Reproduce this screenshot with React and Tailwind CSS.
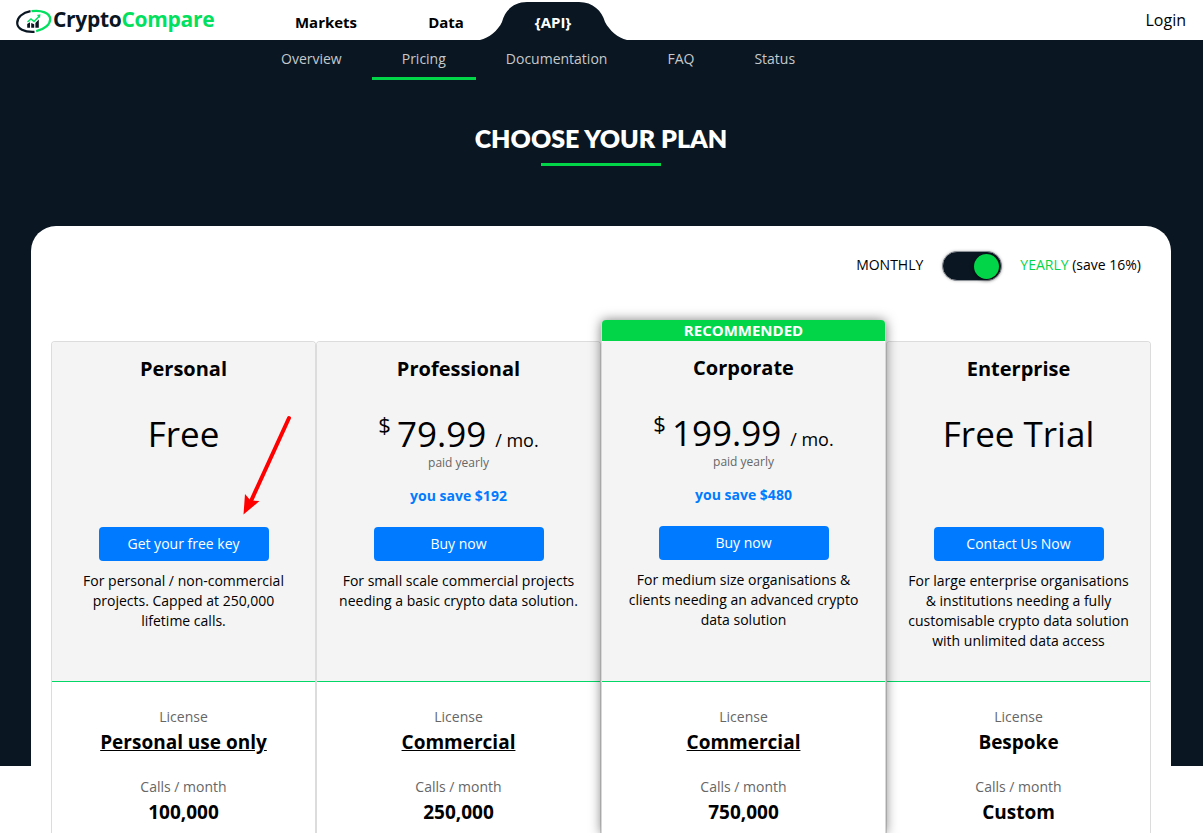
const PLANS = [
  { name: "Personal", price: "Free", cta: "Get your free key", lines: ["For personal / non-commercial", "projects. Capped at 250,000", "lifetime calls."], license: "Personal use only", link: true, calls: "100,000", width: "w-[265px]" },
  { name: "Professional", price: "79.99", paid: true, save: "you save $192", cta: "Buy now", lines: ["For small scale commercial projects", "needing a basic crypto data solution."], license: "Commercial", link: true, calls: "250,000", width: "w-[285px]" },
  { name: "Corporate", price: "199.99", paid: true, save: "you save $480", cta: "Buy now", lines: ["For medium size organisations &", "clients needing an advanced crypto", "data solution"], license: "Commercial", link: true, calls: "750,000", width: "w-[285px]", featured: true },
  { name: "Enterprise", price: "Free Trial", cta: "Contact Us Now", lines: ["For large enterprise organisations", "& institutions needing a fully", "customisable crypto data solution", "with unlimited data access"], license: "Bespoke", link: false, calls: "Custom", width: "w-[265px]" },
];

function Logo() {
  return (
    <div className="ml-4 flex h-[40px] w-[220px] items-center">
      <svg width="36" height="26" viewBox="0 0 36 26" fill="none" className="mt-[3px] shrink-0">
        <path d="M14.5 2.200C6.500 3.600 1.200 8.400 1.200 13.900c0 5.600 6.800 9.500 17.300 8.900" stroke="#0a1622" strokeWidth="2.200" />
        <path d="M15.500 2.200C25.500 .700 34.200 4 34.200 10.200c0 5-5.500 10.300-14 12" stroke="#03e060" strokeWidth="2.300" />
        <path d="M11.200 18.700v-3.600l2.800-1.800v5.400zM15.200 18.700v-4.600l3 1.200v3.400zM19.400 18.700v-4.700l3.400-3.500v8.200z" fill="#0a1622" />
        <path d="M11.500 13l3.500-3 3 2.500 5.500-5.500" stroke="#03e060" strokeWidth="1.500" />
        <path d="M20.800 6.100l3.700-.8-.6 3.700z" fill="#03e060" />
      </svg>
      <span className="mt-[-2px] ml-[1px] text-[21px] leading-[40px] font-bold tracking-[-0.3px] whitespace-nowrap text-[#0a1622]">
        Crypto<span className="text-[#03e060]">Compare</span>
      </span>
    </div>
  );
}

function Header() {
  return (
    <header className="flex h-[40px] bg-white">
      <Logo />
      <nav className="flex flex-1 text-[15px] leading-[45px] font-bold text-black">
        <a className="ml-[30px] w-[120px] text-center">Markets</a>
        <a className="w-[120px] text-center">Data</a>
        <a className="relative ml-[-35px] w-[164px] text-center text-white">
          <svg className="absolute top-0 left-0" width="164" height="40" viewBox="0 0 164 40">
            <path d="M9 40C18 38 27 30.500 31 22C34 10 43 2 56 2H108C122 2 131 11 134 22C138.500 30.500 147 38 156 40Z" fill="#0a1622" />
          </svg>
          <span className="relative">{"{API}"}</span>
        </a>
      </nav>
      <a className="mr-[17px] text-[16px] leading-[40px] text-black">Login</a>
    </header>
  );
}

function SubNav() {
  return (
    <nav className="flex h-[40px] pl-[251px] text-[14px] leading-[38px] text-[#c5c9cc]">
      <a className="px-[30px]">Overview</a>
      <a className="border-b-[3px] border-[#03d549] px-[30px]">Pricing</a>
      <a className="px-[30px]">Documentation</a>
      <a className="px-[30px]">FAQ</a>
      <a className="px-[30px]">Status</a>
    </nav>
  );
}

function Plan({ plan }) {
  const shell = plan.featured
    ? "relative z-10 h-[514px] rounded-t-[5px] border-[#d8d8d8] shadow-[0_0_12px_rgba(0,0,0,0.5)]"
    : "mt-[21px] h-[493px] rounded-t-[4px] border-t border-[#dcdcdc]";
  return (
    <section className={`${plan.width} ${shell} shrink-0 border-x bg-white text-center text-black`}>
      {plan.featured && (
        <div className="h-[21px] rounded-t-[4px] bg-[#03d549] text-[15px] leading-[21px] font-bold text-white">RECOMMENDED</div>
      )}
      <div className={`${plan.featured ? "h-[341px]" : "h-[340px]"} flex flex-col items-center rounded-t-[3px] border-b border-[#03d866] bg-[#f4f4f4]`}>
        <h2 className="mt-[13px] h-[28px] text-[20px] leading-[28px] font-bold">{plan.name}</h2>
        <div className="mt-[25px] flex h-[45px] items-baseline justify-center">
          {plan.paid && <span className="relative top-[-14px] mr-[6px] text-[22px] leading-[30px]">$</span>}
          <span className="text-[35px] leading-[52px]">{plan.price}</span>
          {plan.paid && <span className="ml-[9px] text-[18px] leading-[28px]">/ mo.</span>}
        </div>
        <div className="h-[74px] pt-px text-[12px] leading-[18px] text-[#666]">
          {plan.paid && (
            <>
              <div>paid yearly</div>
              <div className="mt-[14px] text-[14px] leading-[20px] font-bold text-[#007bff]">{plan.save}</div>
            </>
          )}
        </div>
        <button className="h-[34px] w-[170px] shrink-0 rounded-[4px] bg-[#007bff] text-[14px] leading-[34px] text-white">{plan.cta}</button>
        <p className="mt-[10px] text-[14px] leading-[20px] whitespace-nowrap">
          {plan.lines.map((line) => (
            <span key={line} className="block">{line}</span>
          ))}
        </p>
      </div>
      <div className="pt-[25px]">
        <div className="text-[14px] leading-[20px] text-[#666]">License</div>
        <div className={`mt-[1px] h-[29px] text-[19px] leading-[28px] font-bold ${plan.link ? "underline" : ""}`}>{plan.license}</div>
        <div className="mt-[20px] text-[14px] leading-[20px] text-[#666]">Calls / month</div>
        <div className="mt-[1px] text-[19px] leading-[28px] font-bold">{plan.calls}</div>
      </div>
    </section>
  );
}

export default function App() {
  return (
    <div className="h-[833px] w-[1203px] overflow-hidden bg-white font-['Open_Sans',sans-serif]">
      <Header />
      <main className="h-[726px] bg-[#0a1622]">
        <SubNav />
        <div className="flex h-[146px] w-[1202px] flex-col items-center pt-[41px]">
          <h1 className="font-['Lato',sans-serif] text-[25px] leading-[34px] font-extrabold text-white">CHOOSE YOUR PLAN</h1>
          <div className="mt-[8px] h-[3px] w-[120px] bg-[#03d549]" />
        </div>
        <div className="ml-[31px] h-[620px] w-[1140px] rounded-t-[25px] bg-white px-[20px]">
          <div className="flex h-[94px] justify-end pt-[25px] pr-[10px] text-[14px] leading-[28px] text-black">
            <span>MONTHLY</span>
            <span className="mr-[18px] ml-[19px] flex h-[30px] w-[60px] items-center justify-end rounded-full border border-[#8d9299] bg-[#0a1622] pt-px pr-[2px] shadow-[0_0_3px_rgba(0,0,0,0.25)]">
              <span className="size-[25px] rounded-full bg-[#03d549] shadow-[0_1px_4px_rgba(0,0,0,0.6)]" />
            </span>
            <span><span className="text-[#03d549]">YEARLY</span> (save 16%)</span>
          </div>
          <div className="relative flex">
            {PLANS.map((plan) => <Plan key={plan.name} plan={plan} />)}
            <svg className="absolute top-[94px] left-[188px] z-20" width="56" height="104" viewBox="0 0 56 104">
              <path d="M50 4L12 87" stroke="#f00" strokeWidth="4" strokeLinecap="round" />
              <path d="M4.500 100.500L6 80L11.500 86.500L20.500 87Z" fill="#f00" />
            </svg>
          </div>
        </div>
      </main>
    </div>
  );
}
